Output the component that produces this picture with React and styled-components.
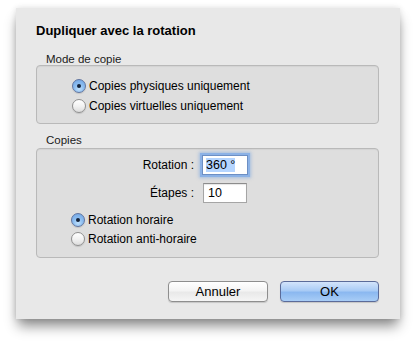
import React from "react";
import styled, { createGlobalStyle } from "styled-components";

const Global = createGlobalStyle`
  html, body { margin: 0; padding: 0; background: #ffffff; }
  body { font-family: "Lucida Grande", "Liberation Sans", Arial, sans-serif; color: #000; }
`;

const Page = styled.div`
  width: 416px;
  height: 344px;
  padding: 8px 16px 0;
  box-sizing: border-box;
`;

const Dialog = styled.div`
  width: 384px;
  height: 311px;
  box-sizing: border-box;
  background: #e8e8e8;
  padding: 13px 21px 0 20px;
  box-shadow: 0 9px 12px -2px rgba(0, 0, 0, 0.45), 0 0 6px rgba(0, 0, 0, 0.12);
  display: flex;
  flex-direction: column;
`;

const Title = styled.h1`
  margin: 0;
  font-size: 13px;
  font-weight: bold;
  line-height: 20px;
`;

const GroupLabel = styled.div`
  font-size: 11.5px;
  line-height: 12px;
  margin: ${(p) => p.$top}px 0 ${(p) => p.$bottom}px 10px;
  color: #1a1a1a;
`;

const GroupBox = styled.div`
  height: ${(p) => p.$h}px;
  box-sizing: border-box;
  border: 1px solid #b9b9b9;
  border-radius: 4px;
  background: #dedede;
  box-shadow: inset 0 1px 1px rgba(0, 0, 0, 0.05);
  padding: ${(p) => p.$pad};
  display: flex;
  flex-direction: column;
`;

const RadioRow = styled.label`
  display: flex;
  align-items: center;
  gap: 3px;
  height: ${(p) => p.$h || 20}px;
  font-size: 12px;
`;

const RadioDot = styled.span`
  width: 14px;
  height: 14px;
  box-sizing: border-box;
  border-radius: 50%;
  border: 1px solid ${(p) => (p.$on ? "#5f74a0" : "#8f8f8f")};
  background: ${(p) =>
    p.$on
      ? "radial-gradient(circle at 50% 75%, #bfe0fc 0%, #8cbdf0 45%, #6da2e2 100%)"
      : "linear-gradient(#ffffff 0%, #f2f2f2 50%, #dcdcdc 100%)"};
  display: flex;
  align-items: center;
  justify-content: center;
  box-shadow: 0 1px 1px rgba(0, 0, 0, 0.12);
  &::after {
    content: "";
    display: ${(p) => (p.$on ? "block" : "none")};
    width: 4px;
    height: 4px;
    border-radius: 50%;
    background: #14233a;
  }
`;

const FormGrid = styled.div`
  display: grid;
  grid-template-columns: 157px 46px;
  column-gap: 8px;
  row-gap: 8px;
  align-items: center;
  margin-bottom: 7px;
`;

const FieldLabel = styled.span`
  text-align: right;
  font-size: 12px;
`;

const Input = styled.div`
  height: 20px;
  box-sizing: border-box;
  background: #fff;
  border: 1px solid ${(p) => (p.$focus ? "#6d8fc4" : "#a5a5a5")};
  border-top-color: ${(p) => (p.$focus ? "#6d8fc4" : "#8c8c8c")};
  box-shadow: ${(p) =>
    p.$focus ? "0 0 0 2px #8cb2e6, 0 0 3px 3px rgba(110,160,225,0.5)" : "inset 0 1px 1px rgba(0,0,0,0.1)"};
  font-size: 12.5px;
  line-height: 18px;
  padding-left: ${(p) => (p.$focus ? 3 : 4)}px;
  margin-left: ${(p) => (p.$focus ? 0 : 1)}px;
  width: ${(p) => (p.$focus ? 46 : 44)}px;
`;

const Selected = styled.span`
  background: #b5d5ff;
`;

const RadioList = styled.div`
  padding-left: 34px;
  display: flex;
  flex-direction: column;
`;

const Buttons = styled.div`
  display: flex;
  justify-content: flex-end;
  gap: 12px;
  margin-top: 23px;
`;

const Button = styled.button`
  width: ${(p) => p.$w}px;
  height: 21px;
  box-sizing: border-box;
  border-radius: 4px;
  font-family: inherit;
  font-size: 13px;
  padding: 0;
  color: #000;
  border: 1px solid ${(p) => (p.$primary ? "#5b6b99" : "#8e8e8e")};
  background: ${(p) =>
    p.$primary
      ? "linear-gradient(#d3e4fb 0%, #a9cbf5 45%, #8bb8f0 55%, #a8cdf6 100%)"
      : "linear-gradient(#ffffff 0%, #f4f4f4 45%, #e9e9e9 55%, #f5f5f5 100%)"};
  box-shadow: 0 1px 1px rgba(0, 0, 0, 0.15);
`;

function Radio({ on, label, h }) {
  return (
    <RadioRow $h={h}>
      <RadioDot $on={on} />
      <span>{label}</span>
    </RadioRow>
  );
}

export default function App() {
  return (
    <>
      <Global />
      <Page>
        <Dialog>
          <Title>Dupliquer avec la rotation</Title>
          <GroupLabel $top={12} $bottom={0}>Mode de copie</GroupLabel>
          <GroupBox $h={59} $pad="10px 0 0 35px">
            <Radio on label="Copies physiques uniquement" />
            <Radio label="Copies virtuelles uniquement" />
          </GroupBox>
          <GroupLabel $top={10} $bottom={2}>Copies</GroupLabel>
          <GroupBox $h={110} $pad="6px 0 0 0">
            <FormGrid>
              <FieldLabel>Rotation :</FieldLabel>
              <Input $focus>
                <Selected>360 °</Selected>
              </Input>
              <FieldLabel>Étapes :</FieldLabel>
              <Input>10</Input>
            </FormGrid>
            <RadioList>
              <Radio on label="Rotation horaire" h={19} />
              <Radio label="Rotation anti-horaire" h={19} />
            </RadioList>
          </GroupBox>
          <Buttons>
            <Button $w={100}>Annuler</Button>
            <Button $w={99} $primary>
              OK
            </Button>
          </Buttons>
        </Dialog>
      </Page>
    </>
  );
}
